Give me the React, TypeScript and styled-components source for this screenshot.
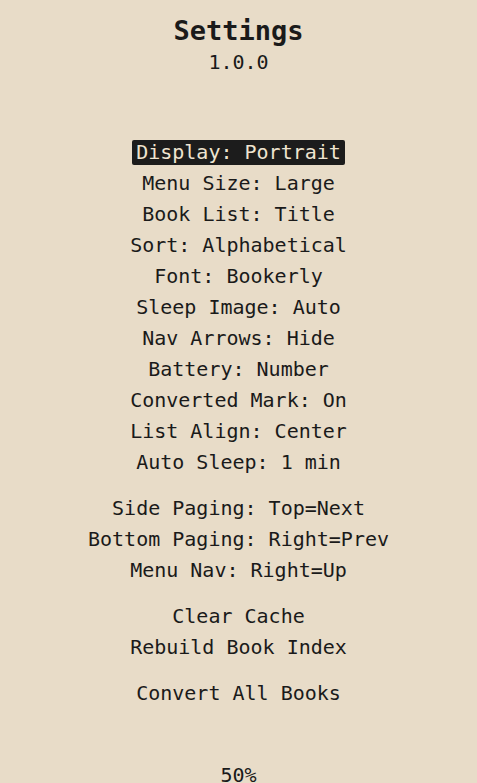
import React from 'react'
import styled, { createGlobalStyle } from 'styled-components'

const GlobalStyle = createGlobalStyle`
  html, body {
    margin: 0;
    padding: 0;
    background: #e8dcc8;
  }
  body {
    font-family: 'DejaVu Sans Mono', 'Liberation Mono', monospace;
    color: #1a1a1a;
  }
`

const Screen = styled.div`
  width: 477px;
  height: 783px;
  overflow: hidden;
  display: flex;
  flex-direction: column;
  align-items: center;
  padding-top: 13px;
  box-sizing: border-box;
`

const Title = styled.h1`
  margin: 0;
  font-size: 27px;
  font-weight: 700;
  line-height: 36px;
`

const Version = styled.div`
  font-size: 20px;
  line-height: 26px;
`

const Menu = styled.div`
  margin-top: 62px;
  display: flex;
  flex-direction: column;
  align-items: center;
  gap: 15px;
`

const Group = styled.div`
  display: flex;
  flex-direction: column;
  align-items: center;
`

const Row = styled.div`
  height: 31px;
  display: flex;
  align-items: center;
  justify-content: center;
  font-size: 20px;
  white-space: pre;
`

const Label = styled.span<{ $selected?: boolean }>`
  display: inline-block;
  line-height: 25px;
  padding: 0 4px;
  border-radius: 2px;
  background: ${p => (p.$selected ? '#1c1c1c' : 'transparent')};
  color: ${p => (p.$selected ? '#efe4d0' : '#1a1a1a')};
`

// battery readout pinned to the bottom edge of the screen
const Footer = styled.div`
  margin-top: auto;
  font-size: 20px;
  line-height: 26px;
  margin-bottom: -5px;
`

const groups: string[][] = [
  [
    'Display: Portrait',
    'Menu Size: Large',
    'Book List: Title',
    'Sort: Alphabetical',
    'Font: Bookerly',
    'Sleep Image: Auto',
    'Nav Arrows: Hide',
    'Battery: Number',
    'Converted Mark: On',
    'List Align: Center',
    'Auto Sleep: 1 min',
  ],
  ['Side Paging: Top=Next', 'Bottom Paging: Right=Prev', 'Menu Nav: Right=Up'],
  ['Clear Cache', 'Rebuild Book Index'],
  ['Convert All Books'],
]

const selected = 'Display: Portrait'

const App: React.FC = () => {
  return (
    <>
      <GlobalStyle />
      <Screen>
        <Title>Settings</Title>
        <Version>1.0.0</Version>
        <Menu>
          {groups.map((items, i) => (
            <Group key={i}>
              {items.map(item => (
                <Row key={item}>
                  <Label $selected={item === selected}>{item}</Label>
                </Row>
              ))}
            </Group>
          ))}
        </Menu>
        <Footer>50%</Footer>
      </Screen>
    </>
  )
}

export default App
